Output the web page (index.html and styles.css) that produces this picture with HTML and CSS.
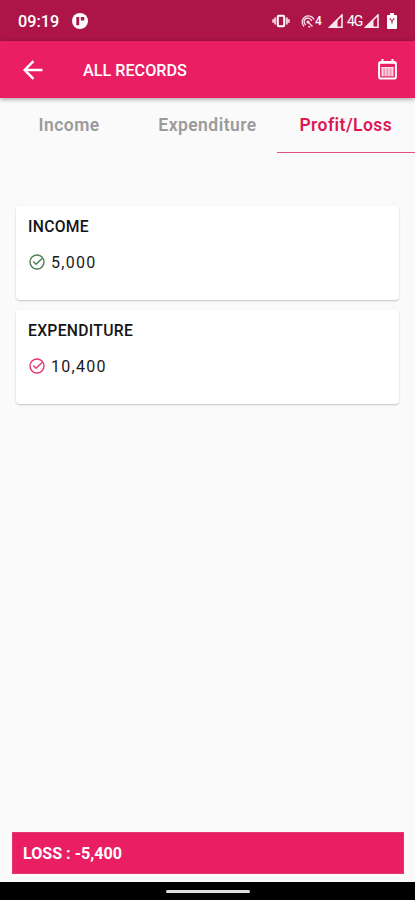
FILE: index.html
```html
<!DOCTYPE html>
<html lang="en">
<head>
    <meta charset="UTF-8">
    <meta name="viewport" content="width=device-width, initial-scale=1.0">
    <title>All Records</title>

    <link rel="stylesheet" href="styles.css">
</head>
<body>
    <div class="statusbar">
        <span class="clock">09:19</span>
        <svg class="app-dot" width="16" height="16" viewBox="0 0 16 16">
            <circle cx="8" cy="8" r="8" fill="#fff"/>
            <path d="M4.3 4h2.9v8.2H4.3zM8.8 4h3.5v3.4H8.8z" fill="#ad1549"/>
        </svg>

        <div class="status-icons">
            <!-- vibrate -->
            <svg class="vibrate" width="18" height="14" viewBox="0 0 18 14">
                <rect x="5.8" y="1.8" width="6.4" height="10.4" rx="1" fill="none" stroke="#fff" stroke-width="2"/>
                <path d="M3.2 3.5v7M14.8 3.5v7M1.2 5.2v3.6M16.8 5.2v3.6" stroke="#f3c9d7" stroke-width="2"/>
            </svg>
            <!-- hotspot -->
            <svg class="hotspot" width="14" height="14" viewBox="0 0 14 14">
                <g fill="none" stroke="#f8dbe5" stroke-width="1.4">
                    <path d="M3 12.5A6.2 6.2 0 1 1 13 5.5"/>
                    <path d="M4.8 11A3.8 3.8 0 1 1 10.6 7"/>
                    <path d="M7 8l4.5 4.5M7.3 12.8h2"/>
                </g>
                <circle cx="7" cy="8" r="1.6" fill="#f8dbe5"/>
            </svg>
            <span class="hotspot-count">4</span>
            <svg class="signal" width="15" height="14" viewBox="0 0 15 14">
                <path d="M1.6 13.2L14 1v12.2z" fill="none" stroke="#fbe6ed" stroke-width="1.6"/>
                <path d="M1 13.5l8.5-8.3v8.3z" fill="#fbe6ed"/>
            </svg>
            <span class="network">4G</span>
            <svg class="signal" width="15" height="14" viewBox="0 0 15 14">
                <path d="M1.6 13.2L14 1v12.2z" fill="none" stroke="#fbe6ed" stroke-width="1.6"/>
                <path d="M1 13.5l8.5-8.3v8.3z" fill="#fbe6ed"/>
            </svg>
            <svg class="battery" width="10" height="16" viewBox="0 0 10 16">
                <path d="M3 0h4v2h2a1 1 0 0 1 1 1v12a1 1 0 0 1-1 1H1a1 1 0 0 1-1-1V3a1 1 0 0 1 1-1h2z" fill="#fff"/>
                <path d="M2.7 5.3L5 8l2.3-2.7M5 8v2.6" fill="none" stroke="#ad1549" stroke-width="1.1"/>
            </svg>
        </div>
    </div>

    <header class="appbar">
        <svg class="back" width="20" height="20" viewBox="0 0 20 20">
            <path d="M19.5 10H2M10.5 1.2L1.7 10l8.8 8.8" fill="none" stroke="#fff" stroke-width="2.4"/>
        </svg>
        <h1>ALL RECORDS</h1>
        <svg class="calendar" width="19" height="21" viewBox="0 0 19 21">
            <path d="M4.5 0v4M14.5 0v4" stroke="#fff" stroke-width="2"/>
            <rect x="1.1" y="3" width="16.8" height="16.6" rx="1.8" fill="none" stroke="#fff" stroke-width="2"/>
            <path d="M1 3h17v1.8H1z" fill="#fff"/>
            <path d="M3.2 8h12.6v9.3H3.2z" fill="#fff" fill-opacity=".5"/>
            <path d="M4.6 8v9.3M7.8 8v9.3M11 8v9.3M14.2 8v9.3M3.2 8.7h12.6" stroke="#fff" stroke-opacity=".75" stroke-width="1.3"/>
        </svg>
    </header>

    <nav class="tabs">
        <a class="tab">Income</a>
        <a class="tab">Expenditure</a>
        <a class="tab active">Profit/Loss</a>
    </nav>

    <main>
        <section class="card income">
            <h2>INCOME</h2>
            <p>
                <svg width="16" height="16" viewBox="0 0 16 16">
                    <circle cx="8" cy="8" r="7"/>
                    <path d="M4.2 7.6l2.9 2.7 5.9-5.8"/>
                </svg>
                <span>5,000</span>
            </p>
        </section>
        <section class="card expenditure">
            <h2>EXPENDITURE</h2>
            <p>
                <svg width="16" height="16" viewBox="0 0 16 16">
                    <circle cx="8" cy="8" r="7"/>
                    <path d="M4.2 7.6l2.9 2.7 5.9-5.8"/>
                </svg>
                <span>10,400</span>
            </p>
        </section>
    </main>

    <div class="total"><span>LOSS : -5,400</span></div>

    <div class="navbar"><div class="handle"></div></div>
</body>
</html>
```

FILE: styles.css
```css
*{
    margin: 0;
    padding: 0;
    box-sizing: border-box;
}

body{
    display: flex;
    flex-direction: column;
    height: 900px;
    background-color: #fafafa;
    font-family: Roboto, sans-serif;
    overflow: hidden;
}

svg{
    display: block;
    flex: none;
}

/* status bar */
.statusbar{
    display: flex;
    align-items: center;
    height: 41px;
    padding: 0 18px;
    background-color: #ad1549;
    color: #fff;
}

.clock{
    width: 54px;
    padding-top: 1px;
    font-size: 16.3px;
    font-weight: 500;
}

.status-icons{
    display: flex;
    align-items: center;
    margin-left: auto;
}

.vibrate{
    margin-right: 1px;
}

.hotspot{
    margin-left: 10px;
}

.hotspot-count{
    width: 7px;
    margin-right: 6px;
    font-size: 12px;
    font-weight: 500;
}

.network{
    width: 15px;
    margin: 0 2px 0 4px;
    font-size: 14px;
    letter-spacing: -1px;
}

.battery{
    margin-left: 8px;
}

/* title bar */
.appbar{
    display: flex;
    align-items: center;
    height: 57px;
    padding: 0 18px 0 23px;
    background-color: #e91e63;
    color: #fff;
    box-shadow: 0 1px 5px rgba(0, 0, 0, .4);
}

.appbar h1{
    margin-left: 40px;
    padding-top: 1px;
    font-size: 16.2px;
    font-weight: 500;
}

.calendar{
    margin-left: auto;
}

/* tabs */
.tabs{
    display: flex;
    height: 55px;
}

.tab{
    flex: 1;
    line-height: 55px;
    text-align: center;
    font-size: 17.5px;
    font-weight: 600;
    letter-spacing: .45px;
    color: #9b9b9b;
}

.tab.active{
    color: #dc1754;
    border-bottom: 1px solid #e2527f;
}

/* cards */
main{
    flex: 1;
    padding: 53px 16px 0;
}

.card{
    height: 94px;
    margin-bottom: 10px;
    padding: 12px;
    background-color: #fff;
    border-radius: 4px;
    box-shadow: 0 1px 2px rgba(0, 0, 0, .22);
}

.card h2{
    line-height: 18px;
    font-size: 15.7px;
    font-weight: 500;
    letter-spacing: .3px;
    color: #151515;
}

.card p{
    display: flex;
    align-items: center;
    height: 20px;
    margin-top: 16px;
    gap: 6px;
    font-size: 16px;
    letter-spacing: 1.3px;
    color: #1a1a1a;
}

.card svg{
    margin-left: 1px;
    fill: none;
    stroke-width: 1.4;
}

.income svg{
    stroke: #4c7f52;
}

.expenditure svg{
    stroke: #e6376e;
}

/* bottom */
.total{
    height: 42px;
    margin: 0 11px 8px 12px;
    padding-left: 10px;
    line-height: 42px;
    background-color: #e91e63;
    border: 1px solid #e23a70;
    color: #fff;
    font-size: 16.1px;
    font-weight: 700;
}

.navbar{
    height: 18px;
    padding-top: 8px;
    background-color: #000;
}

.handle{
    width: 84px;
    height: 3px;
    margin: 0 auto;
    border-radius: 2px;
    background-color: #dedede;
}
```
